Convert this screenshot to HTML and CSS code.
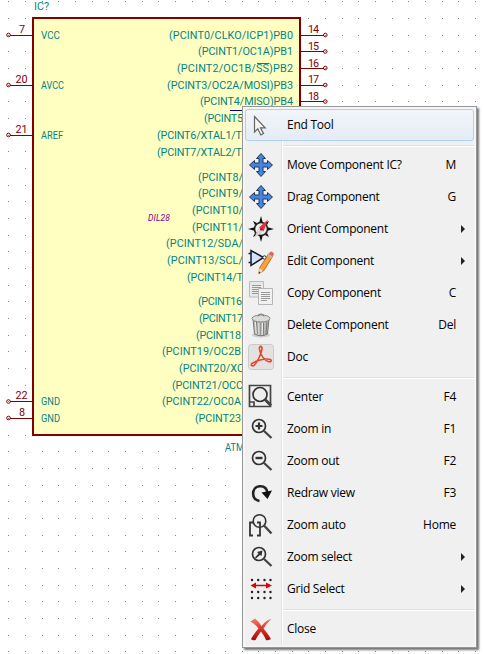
FILE: index.html
```
<!DOCTYPE html>
<html lang="en">
<head>
<meta charset="utf-8">
<title>Schematic editor</title>
<link rel="stylesheet" href="styles.css">
</head>
<body>
<main class="canvas">
<svg class="schematic" width="484" height="654" viewBox="0 0 484 654">
  <defs>
    <pattern id="grid" width="50" height="50" patternUnits="userSpaceOnUse">
      <path class="dot" d="M8 1h1v1h-1zM25 1h1v1h-1zM42 1h1v1h-1zM8 18h1v1h-1zM25 18h1v1h-1zM42 18h1v1h-1zM8 35h1v1h-1zM25 35h1v1h-1zM42 35h1v1h-1z"/>
    </pattern>
  </defs>
  <rect width="484" height="654" fill="url(#grid)"/>
  <rect class="body" x="33" y="18" width="267" height="417"/>
  <g class="pins">
    <path d="M10 35.5H32M10 85.5H32M10 135.5H32M10 401.5H32M10 418.5H32M301 35.5H324M301 51.5H324M301 68.5H324M301 85.5H324M301 101.5H324"/>
    <circle cx="8.5" cy="35" r="1.8"/><circle cx="8.5" cy="85" r="1.8"/><circle cx="8.5" cy="135" r="1.8"/><circle cx="8.5" cy="401.5" r="1.8"/><circle cx="8.5" cy="418" r="1.8"/>
    <circle cx="325.3" cy="35" r="1.8"/><circle cx="325.3" cy="51.5" r="1.8"/><circle cx="325.3" cy="68" r="1.8"/><circle cx="325.3" cy="85" r="1.8"/><circle cx="325.3" cy="101.5" r="1.8"/>
  </g>
  <g class="number">
    <text x="19" y="33">7</text><text x="15.500" y="83" textLength="12">20</text><text x="15.500" y="133" textLength="12">21</text><text x="15.500" y="399" textLength="12">22</text><text x="19" y="416">8</text>
    <text x="308" y="33" textLength="11">14</text><text x="308" y="50" textLength="11">15</text><text x="308" y="67" textLength="11">16</text><text x="308" y="83" textLength="11">17</text><text x="308" y="100" textLength="11">18</text>
  </g>
  <g class="name">
    <text x="34" y="10" textLength="15">IC?</text>
    <text x="41" y="39" textLength="19" lengthAdjust="spacingAndGlyphs">VCC</text><text x="41" y="89" textLength="23" lengthAdjust="spacingAndGlyphs">AVCC</text><text x="41" y="139" textLength="22" lengthAdjust="spacingAndGlyphs">AREF</text>
    <text x="41" y="405" textLength="19" lengthAdjust="spacingAndGlyphs">GND</text><text x="41" y="422" textLength="19" lengthAdjust="spacingAndGlyphs">GND</text>
    <text x="169" y="39" textLength="124">(PCINT0/CLKO/ICP1)PB0</text>
    <text x="198" y="55" textLength="95">(PCINT1/OC1A)PB1</text>
    <text x="177" y="72" textLength="116">(PCINT2/OC1B/SS)PB2</text>
    <path d="M257 63.500H269"/>
    <text x="167" y="89" textLength="126">(PCINT3/OC2A/MOSI)PB3</text>
    <text x="200" y="105" textLength="93">(PCINT4/MISO)PB4</text>
    <text x="204" y="122" textLength="39">(PCINT5</text>
    <text x="157" y="139" textLength="85">(PCINT6/XTAL1/T</text>
    <text x="157" y="156" textLength="85">(PCINT7/XTAL2/T</text>
    <text x="198" y="181" textLength="45">(PCINT8/</text>
    <text x="198" y="197" textLength="45">(PCINT9/</text>
    <text x="192" y="214" textLength="51">(PCINT10/</text>
    <text x="192" y="231" textLength="51">(PCINT11/</text>
    <text x="166" y="247" textLength="77">(PCINT12/SDA/</text>
    <text x="167" y="264" textLength="76">(PCINT13/SCL/</text>
    <text x="187" y="281" textLength="56">(PCINT14/T</text>
    <text x="198" y="305" textLength="44">(PCINT16</text>
    <text x="199" y="322" textLength="44">(PCINT17</text>
    <text x="196" y="339" textLength="45">(PCINT18</text>
    <text x="162" y="355" textLength="79">(PCINT19/OC2B</text>
    <text x="179" y="372" textLength="65">(PCINT20/XC</text>
    <text x="172" y="389" textLength="71">(PCINT21/OCC</text>
    <text x="162" y="405" textLength="79">(PCINT22/OC0A</text>
    <text x="195" y="422" textLength="46">(PCINT23</text>
    <text x="225" y="451" textLength="19" lengthAdjust="spacingAndGlyphs">ATM</text>
  </g>
  <text class="package" x="148" y="221" textLength="22">DIL28</text>
  <path class="cursor" d="M230 110.500H254"/>
</svg>

<nav class="menu">
  <div class="item active"><svg class="icon" viewBox="0 0 28 28"><path d="M7.500 5.500V21l3.300-3.200 3 6.200 2.700-1.400-3-5.800h4.700z" fill="#f5f5f5" stroke="#666" stroke-width="1.200"/></svg><span>End Tool</span></div>
  <hr>
  <div class="item"><svg class="icon" viewBox="0 0 28 28"><path id="move" d="M14 2.500L18.500 7.500H16V12h4.500V9.500L25.500 14l-5 4.500V16H16v4.500h2.500L14 25.500l-4.500-5H12V16H7.500v2.500L2.500 14l5-4.500V12H12V7.500H9.500z" fill="#4385e5" stroke="#263852" stroke-width="1"/></svg><span>Move Component IC?</span><kbd>M</kbd></div>
  <div class="item"><svg class="icon" viewBox="0 0 28 28"><use href="#move"/></svg><span>Drag Component</span><kbd>G</kbd></div>
  <div class="item"><svg class="icon" viewBox="0 0 28 28"><circle cx="14" cy="14" r="6.500" fill="#eee" stroke="#222" stroke-width="1.600"/><path d="M14 1l1.800 6.500h-3.600zM27 14l-6.500 1.800v-3.600zM14 27l-1.800-6.500h3.600zM1 14l6.500-1.800v3.600zM6 6l4 2-2 2zM22 6l-2 4-2-2zM22 22l-4-2 2-2zM6 22l2-4 2 2z" fill="#111"/><path d="M21 4.500l-4.500 12-4.500-4z" fill="#ee2c32"/><path d="M12 12.500l4.500 4L7 23z" fill="#d5d5d5"/><circle cx="14.300" cy="14.300" r="1.300" fill="#922"/></svg><span>Orient Component</span><i class="arrow"></i></div>
  <div class="item"><svg class="icon" viewBox="0 0 28 28"><path d="M4 3.500V18.500L16.500 10.500z" fill="#d4e1ff" stroke="#17172d" stroke-width="1.500"/><path d="M1.500 6.500h3M1.500 15.500h3M18 11h4" stroke="#223" stroke-width="1.500"/><circle cx="17.500" cy="10.500" r="1.700" fill="#fff" stroke="#223"/><path d="M21.500 7l4 2.500-8.500 14-5 3 .5-5.500z" fill="#f7a438" stroke="#a35c19" stroke-width=".8"/><path d="M21.500 7l1.500-2q1.200-.8 2.500 0l1 1q.7 1-.2 2.500l-.8 1z" fill="#e96565"/><path d="M20.500 8.500l4 2.500 1-1.500-4-2.500z" fill="#bbb"/><path d="M12.500 21l3.500 3-4.500 2.700z" fill="#f5d8ae"/><path d="M12 24.500l1.500 1.200-2 1z" fill="#333"/></svg><span>Edit Component</span><i class="arrow"></i></div>
  <div class="item"><svg class="icon" viewBox="0 0 28 28"><path d="M2.500 2.500h14v15.500h-14z" fill="#e8e8e8" stroke="#bbb"/><path d="M5 6.500h9M5 8.500h9M5 10.500h7M5 12.500h7M5 14.500h7" stroke="#999" stroke-width="1.200"/><path d="M11.500 9.500h14v16h-14z" fill="#f1f1f1" stroke="#b5b5b5"/><path d="M14 13.500h9M14 15.500h9M14 17.500h9M14 19.500h9M14 21.500h6" stroke="#999" stroke-width="1.200"/></svg><span>Copy Component</span><kbd>C</kbd></div>
  <div class="item"><svg class="icon" viewBox="0 0 28 28"><ellipse cx="14" cy="24" rx="9" ry="2.500" fill="#ccc"/><path d="M6 8h16l-1.500 15q-6.500 3.500-13 0z" fill="#b9bab6" stroke="#777"/><path d="M9.500 11l.7 12M13 12v12M16.500 12l-.3 12M20 11l-1 12" stroke="#777"/><path d="M8.500 11l.7 12M12 12v12M15.500 12l-.3 12" stroke="#eee"/><ellipse cx="14" cy="7.500" rx="9" ry="3.500" fill="#dcddd9" stroke="#888"/><path d="M11 5.500q0-2.500 3-2.500t3 2.500" fill="none" stroke="#777"/></svg><span>Delete Component</span><kbd>Del</kbd></div>
  <div class="item"><svg class="icon" viewBox="0 0 28 28"><rect x="1.500" y="1.500" width="25" height="25" rx="3" fill="#e3e2e0" stroke="#cbcac8"/><path d="M12.500 6c-.5-3.500 3-3.500 2.500 0-.8 5-4.500 13-7.500 16-2 2-4.500.2-2.500-1.500 4-3 12-5 17-4.300 3.500.6 2.500 3.200-.2 2.500-4-1-9-7-9.300-12.700z" fill="#f7f1ef" stroke="#e5432c" stroke-width="1.600"/></svg><span>Doc</span></div>
  <hr>
  <div class="item"><svg class="icon" viewBox="0 0 28 28"><path d="M7 23.500H2.500V2.500h21v21H7zM2.500 19H7v4.500" fill="none" stroke="#444" stroke-width="1.700"/><circle cx="13" cy="11.500" r="7" fill="#eee" stroke="#333" stroke-width="1.700"/><path d="M18 16.500l6 6" stroke="#444" stroke-width="3"/></svg><span>Center</span><kbd>F4</kbd></div>
  <div class="item"><svg class="icon" viewBox="0 0 28 28"><circle cx="12" cy="11" r="6.500" fill="none" stroke="#333" stroke-width="1.700"/><path d="M16.500 15.500l8 7.500" stroke="#444" stroke-width="2.300"/><path d="M8.500 11h7M12 7.500v7" stroke="#333" stroke-width="2.200"/></svg><span>Zoom in</span><kbd>F1</kbd></div>
  <div class="item"><svg class="icon" viewBox="0 0 28 28"><circle cx="12" cy="11" r="6.500" fill="none" stroke="#333" stroke-width="1.700"/><path d="M16.500 15.500l8 7.500" stroke="#444" stroke-width="2.300"/><path d="M8.500 11h7" stroke="#333" stroke-width="2.400"/></svg><span>Zoom out</span><kbd>F2</kbd></div>
  <div class="item"><svg class="icon" viewBox="0 0 28 28"><path d="M12.500 22C4 21 4 8 12.500 7.300 17 7 20 9.500 20.500 14" fill="none" stroke="#222" stroke-width="2.600"/><path d="M14.500 13.500L25 11.500 20.500 20z" fill="#111"/></svg><span>Redraw view</span><kbd>F3</kbd></div>
  <div class="item"><svg class="icon" viewBox="0 0 28 28"><path d="M6 11.500H3V24.500h3M10 11.500h3V24.500h-3" fill="none" stroke="#333" stroke-width="1.800"/><circle cx="12.500" cy="10" r="6.300" fill="none" stroke="#333" stroke-width="1.600"/><path d="M17 14.500l7.500 8" stroke="#444" stroke-width="2.400"/></svg><span>Zoom auto</span><kbd>Home</kbd></div>
  <div class="item"><svg class="icon" viewBox="0 0 28 28"><circle cx="12" cy="11" r="6.500" fill="none" stroke="#333" stroke-width="1.700"/><path d="M16.500 15.500l8 7.500" stroke="#444" stroke-width="2.300"/><path d="M15.500 7.500L14.500 13l-1.500-1-4 3.500-1-1L11.500 10.500 10 9z" fill="#333"/></svg><span>Zoom select</span><i class="arrow"></i></div>
  <div class="item"><svg class="icon" viewBox="0 0 28 28"><path d="M5 5h0M11.200 5h0M17.500 5h0M23.500 5h0M5 17h0M11.200 17h0M17.500 17h0M23.500 17h0M5 23h0M11.200 23h0M17.500 23h0M23.500 23h0" stroke="#222" stroke-width="2.400" stroke-linecap="round"/><path d="M3.500 10.500L9 7.500v2.200h10V7.500l6 3-6 3v-2.200H9v2.200z" fill="#d8000c"/></svg><span>Grid Select</span><i class="arrow"></i></div>
  <hr>
  <div class="item"><svg class="icon" viewBox="0 0 28 28"><defs><linearGradient id="cross" x2="0" y2="1"><stop stop-color="#f28275"/><stop offset=".5" stop-color="#d92f24"/><stop offset="1" stop-color="#a60809"/></linearGradient></defs><path d="M3.500 6.500l4.500-3q4 3 6.500 7.500Q19 5 24.500 4q-5 4.500-8 9.500 5 6 7.500 10.500-3.500 2-5 1-1.500-4-5-8.500-4 5-5.500 8.500-3 1-4.500-1 3-5.500 7.500-10.500Q8 9 3.500 6.500z" fill="url(#cross)"/></svg><span>Close</span></div>
</nav>
</main>
</body>
</html>
```
FILE: styles.css
```
* { box-sizing: border-box; }
body { margin: 0; background: #fff; }
.canvas { position: relative; width: 484px; height: 654px; overflow: hidden; }
.schematic { display: block; font-family: Roboto, "Liberation Sans", sans-serif; font-size: 10.800px; }
.dot { fill: #848484; shape-rendering: crispEdges; }
.body { fill: #ffffc2; stroke: #840000; stroke-width: 2; }
.pins { fill: none; stroke: #840000; stroke-width: 1; }
.number { fill: #840000; }
.name { fill: #008484; }
.name path { stroke: #008484; }
.package { fill: #840084; font-size: 8.500px; font-style: italic; }
.cursor { stroke: #000084; }

.menu {
  position: absolute;
  left: 242px;
  top: 106px;
  width: 235px;
  height: 542px;
  padding: 2px;
  border: 1px solid #979797;
  background: linear-gradient(90deg, transparent 38px, #e2e3e3 38px, #e2e3e3 39px, #fff 39px, #fff 40px, transparent 40px) no-repeat 0 2px / 100% 536px, #f0f0f0;
  box-shadow: inset 0 0 0 2px #f5f5f5, 2px 2px 2px rgba(0, 0, 0, .55);
  font-family: "Open Sans", "Noto Sans", sans-serif;
  font-size: 12px;
  letter-spacing: -.25px;
  color: #000;
}
.item {
  display: flex;
  align-items: center;
  height: 32px;
  padding: 0 17px 0 2px;
  border: 0 solid transparent;
}
.item.active {
  border: 1px solid #aecff7;
  padding: 0 16px 0 1px;
  border-radius: 3px;
  background: linear-gradient(rgba(243, 246, 251, .9), rgba(228, 235, 246, .9));
}
.icon { width: 28px; height: 28px; flex: none; margin-right: 12px; }
.item span { flex: 1; white-space: nowrap; padding-bottom: 1px; }
.item kbd { font: inherit; margin-right: 1px; padding-bottom: 1px; }
.arrow {
  width: 0;
  height: 0;
  margin-right: -8px;
  border-left: 4px solid #222;
  border-top: 4px solid transparent;
  border-bottom: 4px solid transparent;
}
hr {
  height: 2px;
  margin: 4px 0 2px 38px;
  border: 0;
  border-top: 1px solid #e0e0e0;
  border-bottom: 1px solid #fff;
}
```
